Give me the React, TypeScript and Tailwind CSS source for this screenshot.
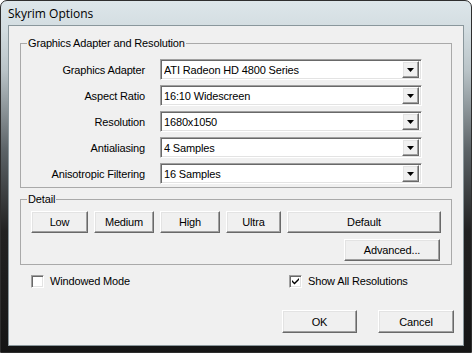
import React from "react";

const raised =
  "bg-[#f0f0f0] border border-t-white border-l-white border-r-[#696969] border-b-[#696969] shadow-[inset_-1px_-1px_0_#a0a0a0,inset_1px_1px_0_#e3e3e3]";
const sunken =
  "bg-white border border-t-[#a0a0a0] border-l-[#a0a0a0] border-r-white border-b-white shadow-[inset_1px_1px_0_#696969,inset_-1px_-1px_0_#e3e3e3]";

function Button({ label, className }: { label: string; className: string }) {
  return (
    <div className={`${raised} flex items-center justify-center text-black ${className}`}>
      {label}
    </div>
  );
}

function Select({ value }: { value: string }) {
  return (
    <div className={`${sunken} w-[262px] h-[21px] flex items-center pl-[3px] pr-[2px]`}>
      <span className="flex-1 truncate">{value}</span>
      <div className={`${raised} w-[17px] h-[17px] flex items-center justify-center`}>
        <svg width="7" height="4" viewBox="0 0 7 4">
          <path d="M0 0h7L3.5 4z" fill="#000" />
        </svg>
      </div>
    </div>
  );
}

function Checkbox({ label, checked }: { label: string; checked?: boolean }) {
  return (
    <div className="flex items-center gap-[6px]">
      <div className={`${sunken} w-[13px] h-[13px] flex items-center justify-center`}>
        {checked && (
          <svg width="7" height="7" viewBox="0 0 7 7">
            <path d="M0 2l2.5 2.5L7 0v2L2.5 6.5 0 4z" fill="#000" />
          </svg>
        )}
      </div>
      <span>{label}</span>
    </div>
  );
}

const rows = [
  { label: "Graphics Adapter", value: "ATI Radeon HD 4800 Series" },
  { label: "Aspect Ratio", value: "16:10 Widescreen" },
  { label: "Resolution", value: "1680x1050" },
  { label: "Antialiasing", value: "4 Samples" },
  { label: "Anisotropic Filtering", value: "16 Samples" },
];

export default function App() {
  return (
    <div className="w-[472px] h-[353px] rounded-t-[7px] border border-[#2e2e2e] flex flex-col bg-[linear-gradient(to_bottom,#dde6ea_0px,#d2dce0_30px,#b9c3c7_70px,#5b6266_150px,#222_230px,#151515_100%)]">
      <div className="h-[24px] flex items-center pl-[7px] pt-[1px] text-[12px] text-black [font-family:'Open_Sans',sans-serif]">
        Skyrim Options
      </div>
      <div className="ml-[7px] w-[456px] h-[321px] border border-[#8a979c] bg-[#f0f0f0] text-[11px] leading-[14px] tracking-[-0.15px] text-black [font-family:'Liberation_Sans',Arial,sans-serif] flex flex-col">
        <fieldset className="mx-[11px] mt-[10px] border border-[#a9a9a9] pt-[9px] pb-[3px] px-0">
          <legend className="ml-[6px] px-[1px] leading-[14px]">Graphics Adapter and Resolution</legend>
          <div className="flex flex-col gap-[5px]">
            {rows.map((r) => (
              <div key={r.label} className="flex items-center">
                <div className="w-[124px] text-right">{r.label}</div>
                <div className="ml-[15px]">
                  <Select value={r.value} />
                </div>
              </div>
            ))}
          </div>
        </fieldset>
        <fieldset className="mx-[11px] mt-[4px] border border-[#a9a9a9] pt-[5px] pb-[3px] pl-[10px] pr-0">
          <legend className="ml-[-4px] px-[1px] leading-[14px]">Detail</legend>
          <div className="flex gap-[6px]">
            <Button label="Low" className="w-[57px] h-[22px]" />
            <Button label="Medium" className="w-[60px] h-[22px]" />
            <Button label="High" className="w-[60px] h-[22px]" />
            <Button label="Ultra" className="w-[55px] h-[22px]" />
            <Button label="Default" className="w-[154px] h-[22px]" />
          </div>
          <div className="flex justify-end mt-[6px] pr-[11px]">
            <Button label="Advanced..." className="w-[96px] h-[22px]" />
          </div>
        </fieldset>
        <div className="flex mt-[9px] pl-[22px]">
          <div className="w-[258px]">
            <Checkbox label="Windowed Mode" />
          </div>
          <Checkbox label="Show All Resolutions" checked />
        </div>
        <div className="flex justify-end gap-[21px] mt-[22px] pr-[9px]">
          <Button label="OK" className="w-[75px] h-[23px]" />
          <Button label="Cancel" className="w-[76px] h-[23px]" />
        </div>
      </div>
    </div>
  );
}
